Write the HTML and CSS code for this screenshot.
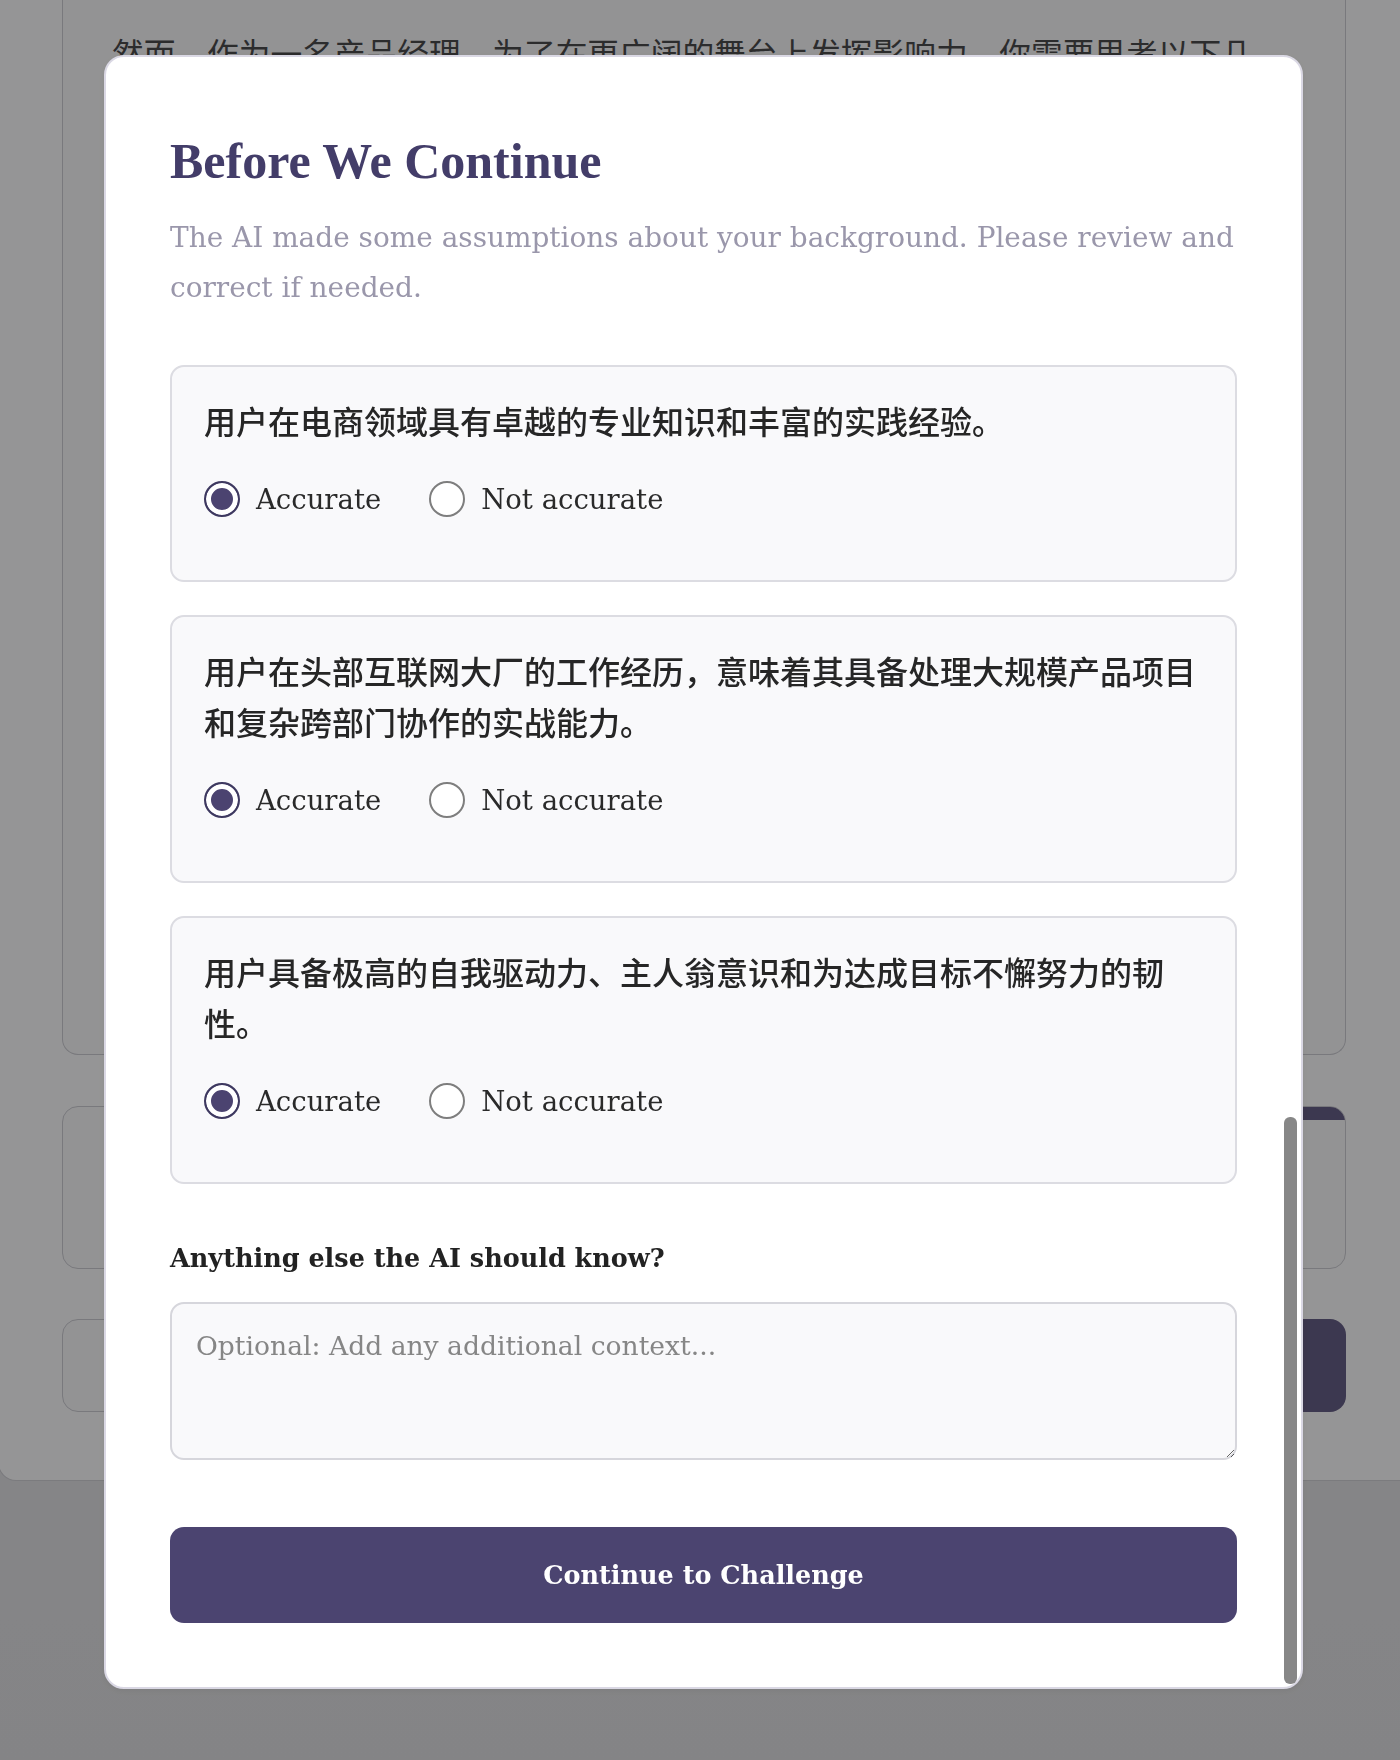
FILE: index.html
```html
<!DOCTYPE html>
<html lang="zh-CN">
<head>
<meta charset="utf-8">
<title>Before We Continue</title>
<link rel="stylesheet" href="styles.css">
</head>
<body>
<div class="shell">
  <section class="story">
    <p class="story-text">然而，作为一名产品经理，为了在更广阔的舞台上发挥影响力，你需要思考以下几</p>
  </section>
  <section class="panel"><span class="panel-tag"></span></section>
  <div class="reply-row">
    <div class="reply-input"></div>
    <button class="reply-btn" type="button"></button>
  </div>
</div>

<div class="overlay">
  <div class="modal">
    <h2 class="modal-title">Before We Continue</h2>
    <p class="modal-sub">The AI made some assumptions about your background. Please review and correct if needed.</p>

    <div class="assumptions">
      <div class="assumption">
        <p class="assumption-text">用户在电商领域具有卓越的专业知识和丰富的实践经验。</p>
        <div class="choices">
          <label class="choice"><input type="radio" name="a1" checked><span>Accurate</span></label>
          <label class="choice"><input type="radio" name="a1"><span>Not accurate</span></label>
        </div>
      </div>
      <div class="assumption">
        <p class="assumption-text">用户在头部互联网大厂的工作经历，意味着其具备处理大规模产品项目和复杂跨部门协作的实战能力。</p>
        <div class="choices">
          <label class="choice"><input type="radio" name="a2" checked><span>Accurate</span></label>
          <label class="choice"><input type="radio" name="a2"><span>Not accurate</span></label>
        </div>
      </div>
      <div class="assumption">
        <p class="assumption-text">用户具备极高的自我驱动力、主人翁意识和为达成目标不懈努力的韧性。</p>
        <div class="choices">
          <label class="choice"><input type="radio" name="a3" checked><span>Accurate</span></label>
          <label class="choice"><input type="radio" name="a3"><span>Not accurate</span></label>
        </div>
      </div>
    </div>

    <label class="extra-label" for="extra">Anything else the AI should know?</label>
    <textarea id="extra" class="extra" placeholder="Optional: Add any additional context..."></textarea>

    <button class="continue" type="button">Continue to Challenge</button>

    <div class="scroll-thumb"></div>
  </div>
</div>
</body>
</html>
```

FILE: styles.css
```css
* { box-sizing: border-box; }

html, body { margin: 0; padding: 0; }

body {
  width: 1400px;
  height: 1760px;
  overflow: hidden;
  background: linear-gradient(#eeeef0, #e2e2e4);
  font-family: "DejaVu Serif", "Noto Sans CJK SC", serif;
}

/* ---------- page behind the dialog ---------- */
.shell {
  margin-left: -2px;
  width: 1430px;
  background: #ffffff;
  border: 1.5px solid #d2d2d6;
  border-top: none;
  border-radius: 0 0 18px 18px;
  padding: 0 81px 68px 63px;
}

.story {
  height: 1055px;
  background: #fbfbfc;
  border: 1.5px solid #cfcfd4;
  border-top: none;
  border-radius: 0 0 16px 16px;
  padding: 28px 40px 0 49px;
  overflow: hidden;
}

.story-text {
  margin: 0;
  font-family: "Noto Sans CJK SC", sans-serif;
  font-size: 31.7px;
  line-height: 48px;
  color: #4c4c4c;
  white-space: nowrap;
}

.panel {
  position: relative;
  margin-top: 51px;
  height: 163px;
  background: #fbfbfc;
  border: 1.5px solid #cfcfd4;
  border-radius: 16px;
  overflow: hidden;
}

.panel-tag {
  position: absolute;
  top: 0;
  right: 0;
  width: 240px;
  height: 13px;
  background: #686087;
}

.reply-row {
  display: flex;
  gap: 16px;
  margin-top: 50px;
  height: 93px;
}

.reply-input {
  flex: 1;
  background: #fbfbfc;
  border: 1.5px solid #cfcfd4;
  border-radius: 16px;
}

.reply-btn {
  width: 200px;
  border: none;
  border-radius: 16px;
  background: #686087;
}

/* ---------- overlay + dialog ---------- */
.overlay {
  position: fixed;
  inset: 0;
  background: rgba(0, 0, 2, 0.415);
  padding: 55px 0 0 104px;
}

.modal {
  position: relative;
  width: 1199px;
  background: #ffffff;
  border: 2px solid #dad8e4;
  border-radius: 20px;
  padding: 74px 64px 64px;
  box-shadow: 0 2px 6px rgba(0, 0, 0, 0.06);
}

.modal-title {
  margin: 0;
  font-family: "Liberation Serif", "Times New Roman", serif;
  font-weight: 700;
  font-size: 50px;
  line-height: 60px;
  color: #433d69;
}

.modal-sub {
  margin: 22px 0 0;
  font-size: 27.95px;
  line-height: 50px;
  color: #9a97ab;
}

.assumptions {
  display: flex;
  flex-direction: column;
  gap: 33px;
  margin-top: 52px;
}

.assumption {
  background: #f9f9fb;
  border: 2px solid #dcdce2;
  border-radius: 14px;
  padding: 28px 32px 62.5px;
}

.assumption-text {
  margin: 0 0 35px;
  font-family: "Noto Sans CJK SC", sans-serif;
  font-weight: 500;
  font-size: 32px;
  line-height: 51.2px;
  color: #262626;
}

.choices {
  display: flex;
  align-items: center;
  gap: 48px;
  height: 36px;
}

.choice {
  display: flex;
  align-items: center;
  gap: 16px;
  font-size: 27.5px;
  color: #2a2a2a;
}

.choice input {
  appearance: none;
  -webkit-appearance: none;
  margin: 0;
  width: 36px;
  height: 36px;
  border: 2px solid #7e7e7e;
  border-radius: 50%;
  background: #ffffff;
}

.choice input:checked {
  border-color: #3e3960;
  background: #4b4370;
  box-shadow: inset 0 0 0 5px #ffffff;
}

.extra-label {
  display: block;
  margin: 55px 0 25px;
  font-weight: 700;
  font-size: 25.5px;
  line-height: 38px;
  color: #222222;
}

.extra {
  display: block;
  width: 100%;
  height: 158px;
  margin: 0;
  padding: 22px 24px;
  background: #f9f9fb;
  border: 2px solid #d6d6dc;
  border-radius: 14px;
  font-family: "DejaVu Serif", serif;
  font-size: 26.6px;
  line-height: 1.5;
  color: #333333;
  resize: vertical;
}

.extra::placeholder { color: #868686; }

.continue {
  display: block;
  width: 100%;
  height: 96px;
  margin-top: 67px;
  border: none;
  border-radius: 14px;
  background: #4b4470;
  color: #ffffff;
  font-family: "DejaVu Serif", serif;
  font-weight: 700;
  font-size: 25.5px;
}

.scroll-thumb {
  position: absolute;
  top: 1060px;
  right: 4px;
  bottom: 3px;
  width: 13px;
  background: #878787;
  border-radius: 6px;
}
```
